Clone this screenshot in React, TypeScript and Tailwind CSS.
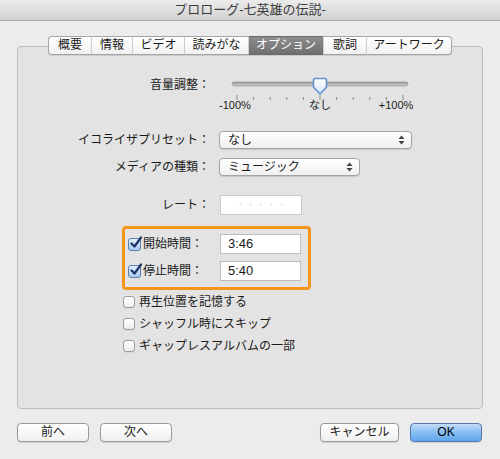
import React from "react";

const tabs: { label: string; w: number; active?: boolean }[] = [
  { label: "概要", w: 43 },
  { label: "情報", w: 41 },
  { label: "ビデオ", w: 52 },
  { label: "読みがな", w: 64 },
  { label: "オプション", w: 75, active: true },
  { label: "歌詞", w: 43 },
  { label: "アートワーク", w: 86 },
];

function Arrows() {
  return (
    <svg width="7" height="10" viewBox="0 0 7 10" className="shrink-0">
      <path d="M3.5 0.5 L6.5 4 H0.5 Z" fill="#444" />
      <path d="M3.5 9.5 L6.5 6 H0.5 Z" fill="#444" />
    </svg>
  );
}

function Select({ w, text }: { w: string; text: string }) {
  return (
    <div
      className={`${w} h-[18px] rounded-[4px] border border-[#a3a3a3] bg-linear-to-b from-white to-[#f0f0f0] shadow-[0_1px_1px_rgba(0,0,0,0.12)] flex items-center justify-between pl-[8px] pr-[6px]`}
    >
      <span className="leading-[16px]">{text}</span>
      <Arrows />
    </div>
  );
}

function Checkbox({ checked }: { checked?: boolean }) {
  if (checked) {
    return (
      <div className="w-[13px] h-[13px] shrink-0 rounded-[3px] border border-[#5a7fb3] bg-linear-to-b from-[#e3eefb] to-[#a9c9ef] relative">
        <svg width="14" height="14" viewBox="0 0 14 14" className="absolute left-[0px] top-[-3px]">
          <path d="M2.5 7.5 L5.5 10.5 L12 1.5" fill="none" stroke="#1d3566" strokeWidth="2.2" strokeLinecap="round" strokeLinejoin="round" />
        </svg>
      </div>
    );
  }
  return (
    <div className="w-[12px] h-[12px] shrink-0 rounded-[3px] border border-[#9c9c9c] bg-linear-to-b from-white to-[#ececec] shadow-[0_1px_0_rgba(0,0,0,0.05)]" />
  );
}

function Slider() {
  const ticks = Array.from({ length: 11 }, (_, i) => i);
  return (
    <svg width="200" height="26" viewBox="0 0 200 26" className="shrink-0 overflow-visible">
      <defs>
        <linearGradient id="trk" x1="0" y1="0" x2="0" y2="1">
          <stop offset="0" stopColor="#9a9a9a" />
          <stop offset="1" stopColor="#cfcfcf" />
        </linearGradient>
        <linearGradient id="thm" x1="0" y1="0" x2="0" y2="1">
          <stop offset="0" stopColor="#ffffff" />
          <stop offset="1" stopColor="#dbe8f7" />
        </linearGradient>
      </defs>
      <rect x="13" y="6" width="176" height="4" rx="2" fill="url(#trk)" stroke="#8c8c8c" strokeWidth="0.6" />
      {ticks.map((i) => {
        const x = 18 + i * 16.6;
        const major = i === 0 || i === 5 || i === 10;
        return (
          <line key={i} x1={x} x2={x} y1={major ? 19 : 21} y2={24} stroke="#8a8a8a" strokeWidth="1" />
        );
      })}
      <path
        d="M94.5 4.5 Q94.5 2.5 96.5 2.5 H105.5 Q107.5 2.5 107.5 4.5 V11 L101 18 L94.5 11 Z"
        fill="url(#thm)"
        stroke="#5f93d6"
        strokeWidth="1.6"
        strokeLinejoin="round"
      />
    </svg>
  );
}

function Button({ w, children, primary }: { w: string; children: React.ReactNode; primary?: boolean }) {
  return (
    <div
      className={`${w} h-[19px] rounded-[4px] border flex items-center justify-center leading-[17px] shadow-[0_1px_1px_rgba(0,0,0,0.12)] ${
        primary
          ? "border-[#5878ad] bg-linear-to-b from-[#c2ddf8] via-[#86bdf3] to-[#5fa6ee] text-black"
          : "border-[#9a9a9a] bg-linear-to-b from-white to-[#f0f0f0]"
      }`}
    >
      {children}
    </div>
  );
}

export default function App() {
  return (
    <div className="w-[500px] h-[459px] bg-[#ececec] flex flex-col text-[12px] text-[#1a1a1a] [font-family:'Liberation_Sans','Noto_Sans_CJK_JP',sans-serif] overflow-hidden">
      <div className="h-[21px] shrink-0 bg-linear-to-b from-[#ececec] to-[#d2d2d2] border-b border-[#a8a8a8] flex items-center justify-center text-[13px] text-[#3c3c3c] leading-[20px]">
        プロローグ-七英雄の伝説-
      </div>
      <div className="px-[17px] flex flex-col">
        <div className="mt-[25px] h-[363px] rounded-[4px] border border-[#bebebe] bg-[#e3e3e3] flex flex-col">
          {/* tabs */}
          <div className="-mt-[11px] ml-[30px] flex h-[19px]">
            {tabs.map((t, i) => (
              <div
                key={t.label}
                style={{ width: t.w }}
                className={`h-[19px] flex items-center justify-center leading-[17px] border-y border-[#a4a4a4] ${
                  i === 0 ? "border-l rounded-l-[4px]" : ""
                } ${i === tabs.length - 1 ? "border-r rounded-r-[4px]" : ""} ${
                  i > 0 ? "border-l border-l-[#cfcfcf]" : ""
                } ${
                  t.active
                    ? "bg-linear-to-b from-[#8d8d8d] to-[#6f6f6f] text-white border-y-[#6a6a6a]"
                    : "bg-linear-to-b from-white to-[#f1f1f1] text-[#1a1a1a]"
                } shadow-[0_1px_1px_rgba(0,0,0,0.1)]`}
              >
                {t.label}
              </div>
            ))}
          </div>

          {/* volume */}
          <div className="mt-[21px] flex h-[26px]">
            <div className="w-[192px] text-right leading-[18px]">音量調整：</div>
            <div className="ml-[9px]">
              <Slider />
            </div>
          </div>
          <div className="-mt-[4px] flex h-[14px] text-[11px] leading-[14px]">
            <div className="w-[192px]" />
            <div className="ml-[9px] flex">
              <span className="-ml-[3px] w-[38px] flex justify-center whitespace-nowrap">-100%</span>
              <span className="w-[132px] flex justify-center whitespace-nowrap">なし</span>
              <span className="w-[20px] flex justify-center whitespace-nowrap">+100%</span>
            </div>
          </div>

          {/* EQ */}
          <div className="mt-[19px] flex items-center h-[18px]">
            <div className="w-[192px] text-right leading-[18px]">イコライザプリセット：</div>
            <div className="ml-[9px]">
              <Select w="w-[193px]" text="なし" />
            </div>
          </div>

          {/* media */}
          <div className="mt-[9px] flex items-center h-[18px]">
            <div className="w-[192px] text-right leading-[18px]">メディアの種類：</div>
            <div className="ml-[9px]">
              <Select w="w-[141px]" text="ミュージック" />
            </div>
          </div>

          {/* rate */}
          <div className="mt-[19px] flex items-center h-[20px]">
            <div className="w-[192px] text-right leading-[18px]">レート：</div>
            <div className="ml-[10px] w-[82px] h-[20px] bg-white border border-[#cacaca] flex items-center justify-center gap-[7px] text-[#c4c4c4] text-[10px] leading-[10px]">
              <span>·</span>
              <span>·</span>
              <span>·</span>
              <span>·</span>
              <span>·</span>
            </div>
          </div>

          {/* orange box */}
          <div className="mt-[11px] ml-[104px] w-[189px] h-[64px] rounded-[4px] border-[3px] border-[#f4951c] flex flex-col pt-[5px] pl-[3px] gap-[7px]">
            <div className="flex items-center h-[20px]">
              <div className="w-[92px] flex items-center gap-[2px]">
                <Checkbox checked />
                <span className="leading-[18px]">開始時間：</span>
              </div>
              <div className="w-[81px] h-[20px] bg-white border border-[#bdbdbd] flex items-center pl-[7px] text-[13px]">
                3:46
              </div>
            </div>
            <div className="flex items-center h-[20px]">
              <div className="w-[92px] flex items-center gap-[2px]">
                <Checkbox checked />
                <span className="leading-[18px]">停止時間：</span>
              </div>
              <div className="w-[81px] h-[20px] bg-white border border-[#bdbdbd] flex items-center pl-[7px] text-[13px]">
                5:40
              </div>
            </div>
          </div>

          {/* checkboxes */}
          <div className="mt-[1px] ml-[105px] flex flex-col">
            {["再生位置を記憶する", "シャッフル時にスキップ", "ギャップレスアルバムの一部"].map((s) => (
              <div key={s} className="h-[22px] flex items-center gap-[4px]">
                <Checkbox />
                <span className="leading-[18px]">{s}</span>
              </div>
            ))}
          </div>
        </div>

        {/* buttons */}
        <div className="mt-[14px] flex items-center">
          <Button w="w-[72px]">前へ</Button>
          <div className="ml-[11px]">
            <Button w="w-[72px]">次へ</Button>
          </div>
          <div className="flex-1" />
          <Button w="w-[79px]">キャンセル</Button>
          <div className="ml-[11px] mr-[1px]">
            <Button w="w-[72px]" primary>
              OK
            </Button>
          </div>
        </div>
      </div>
    </div>
  );
}
